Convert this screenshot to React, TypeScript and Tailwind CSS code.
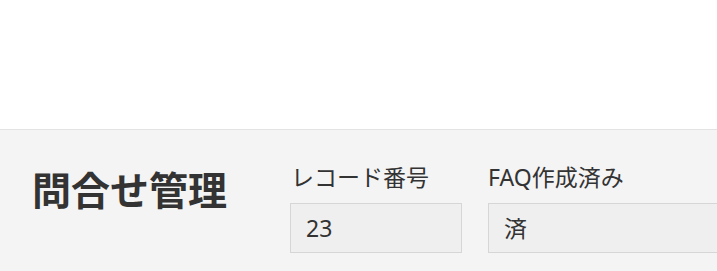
export default function App() {
  const font = { fontFamily: '"Noto Sans", "Noto Sans CJK JP", sans-serif' };
  return (
    <div className="w-[717px] h-[271px] overflow-hidden bg-white text-[#333333]" style={font}>
      <div className="h-[129px] bg-white" />
      <div className="h-[142px] border-t border-[#e3e3e3] bg-[#f4f4f4] flex">
        <h1 className="shrink-0 ml-[32px] mt-[36px] w-[258px] text-[39px] leading-[48px] font-bold whitespace-nowrap">問合せ管理</h1>
        <div className="flex shrink-0 gap-[26px] pt-[31px]">
          <div className="flex flex-col w-[172px] shrink-0">
            <div className="text-[23px] leading-[33px] pl-[1px] whitespace-nowrap">レコード番号</div>
            <div className="mt-[9px] h-[50px] border border-[#d6d6d6] bg-[#efefef] pl-[15px] flex items-center text-[23px]">23</div>
          </div>
          <div className="flex flex-col w-[260px] shrink-0">
            <div className="text-[23px] leading-[33px] whitespace-nowrap">FAQ作成済み</div>
            <div className="mt-[9px] h-[50px] border border-[#d6d6d6] bg-[#efefef] pl-[15px] flex items-center text-[23px]">済</div>
          </div>
        </div>
      </div>
    </div>
  );
}
